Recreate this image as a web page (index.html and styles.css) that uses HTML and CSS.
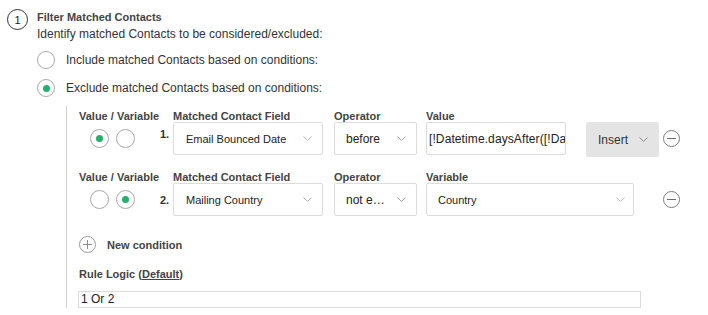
FILE: index.html
```html
<!DOCTYPE html>
<html>
<head>
<meta charset="utf-8">
<link rel="stylesheet" href="styles.css">
</head>
<body>
<div class="step">
  <div class="step-num">1</div>
  <div class="step-body">
    <div class="step-title">Filter Matched Contacts</div>
    <div class="step-desc">Identify matched Contacts to be considered/excluded:</div>
    <div class="option"><span class="radio"></span><span class="option-text">Include matched Contacts based on conditions:</span></div>
    <div class="option"><span class="radio radio-on"></span><span class="option-text">Exclude matched Contacts based on conditions:</span></div>

    <div class="conditions">
      <div class="cond-row">
        <div class="col col-vv">
          <div class="col-label">Value / Variable</div>
          <div class="vv-ctrl">
            <span class="radio radio-sm radio-on"></span>
            <span class="radio radio-sm"></span>
            <span class="cond-num cond-num-top">1.</span>
          </div>
        </div>
        <div class="col col-field">
          <div class="col-label">Matched Contact Field</div>
          <div class="select select-sm"><span>Email Bounced Date</span><svg class="chev" width="9" height="5" viewBox="0 0 9 5"><path d="M0.5 0.5 L4.5 4.5 L8.5 0.5" fill="none" stroke="#b0b0b0" stroke-width="1"/></svg></div>
        </div>
        <div class="col col-op">
          <div class="col-label">Operator</div>
          <div class="select"><span>before</span><svg class="chev" width="9" height="5" viewBox="0 0 9 5"><path d="M0.5 0.5 L4.5 4.5 L8.5 0.5" fill="none" stroke="#a8a8a8" stroke-width="1"/></svg></div>
        </div>
        <div class="col col-value">
          <div class="col-label">Value</div>
          <div class="text-input"><span class="input-text">[!Datetime.daysAfter([!Da</span></div>
        </div>
        <div class="col col-insert">
          <div class="insert-btn"><span>Insert</span><svg class="chev" width="9" height="5" viewBox="0 0 9 5"><path d="M0.5 0.5 L4.5 4.5 L8.5 0.5" fill="none" stroke="#8c8c8c" stroke-width="1"/></svg></div>
        </div>
        <div class="col col-remove">
          <span class="circle-btn"><span class="bar"></span></span>
        </div>
      </div>

      <div class="cond-row">
        <div class="col col-vv">
          <div class="col-label">Value / Variable</div>
          <div class="vv-ctrl">
            <span class="radio radio-sm"></span>
            <span class="radio radio-sm radio-on"></span>
            <span class="cond-num">2.</span>
          </div>
        </div>
        <div class="col col-field">
          <div class="col-label">Matched Contact Field</div>
          <div class="select select-sm"><span>Mailing Country</span><svg class="chev" width="9" height="5" viewBox="0 0 9 5"><path d="M0.5 0.5 L4.5 4.5 L8.5 0.5" fill="none" stroke="#b0b0b0" stroke-width="1"/></svg></div>
        </div>
        <div class="col col-op">
          <div class="col-label">Operator</div>
          <div class="select"><span>not e…</span><svg class="chev" width="9" height="5" viewBox="0 0 9 5"><path d="M0.5 0.5 L4.5 4.5 L8.5 0.5" fill="none" stroke="#a8a8a8" stroke-width="1"/></svg></div>
        </div>
        <div class="col col-variable">
          <div class="col-label">Variable</div>
          <div class="select select-sm select-var"><span>Country</span><svg class="chev" width="9" height="5" viewBox="0 0 9 5"><path d="M0.5 0.5 L4.5 4.5 L8.5 0.5" fill="none" stroke="#c4c4c4" stroke-width="1"/></svg></div>
        </div>
        <div class="col col-remove">
          <span class="circle-btn"><span class="bar"></span></span>
        </div>
      </div>

      <div class="new-cond">
        <span class="circle-btn circle-light"><span class="bar"></span><span class="bar bar-v"></span></span>
        <span class="new-cond-text">New condition</span>
      </div>

      <div class="rule-label">Rule Logic (<span class="underline">Default</span>)</div>
      <div class="rule-input">1 Or 2</div>
    </div>
  </div>
</div>
</body>
</html>
```

FILE: styles.css
```css
* { box-sizing: border-box; }

body {
  margin: 0;
  font-family: "Liberation Sans", Arial, Helvetica, sans-serif;
  font-size: 12px;
  color: #333;
  background: #fff;
}

.step {
  display: flex;
  align-items: flex-start;
  padding-left: 7px;
}

.step-num {
  margin-top: 9px;
  width: 21px;
  height: 21px;
  border: 1px solid #333;
  border-radius: 50%;
  display: flex;
  align-items: center;
  justify-content: center;
  font-size: 11px;
  color: #222;
  flex: none;
}

.step-body {
  margin-left: 9px;
  padding-top: 10px;
  flex: 1;
}

.step-title {
  font-size: 11px;
  font-weight: bold;
  line-height: 14px;
  color: #444;
}

.step-desc {
  margin-top: 2px;
  line-height: 16px;
  font-size: 12px;
  color: #333;
}

.option {
  display: flex;
  align-items: center;
  height: 28px;
}
.step-desc + .option { margin-top: 4px; }

.option-text {
  margin-left: 11px;
  font-size: 12px;
  color: #333;
}

.radio {
  width: 18px;
  height: 18px;
  border: 1px solid #a8a8a8;
  border-radius: 50%;
  display: inline-flex;
  align-items: center;
  justify-content: center;
  background: #fff;
  flex: none;
}
.radio-on::after {
  content: "";
  width: 7px;
  height: 7px;
  border-radius: 50%;
  background: #23b16b;
}
.radio-sm {
  width: 19px;
  height: 19px;
}

.conditions {
  margin-left: 29px;
  margin-top: 4px;
  padding: 4px 0 0 12px;
  border-left: 1px solid #cfcfcf;
}

.cond-row {
  display: flex;
  align-items: flex-start;
  margin-bottom: 14px;
}

.col {
  display: flex;
  flex-direction: column;
  flex: none;
}

.col-label {
  font-size: 11px;
  font-weight: bold;
  line-height: 12px;
  height: 12px;
  color: #444;
  white-space: nowrap;
}

.col-vv { width: 94px; }

.vv-ctrl {
  height: 33px;
  display: flex;
  align-items: center;
  padding-left: 11px;
  gap: 7px;
}

.cond-num {
  margin-left: 18px;
  font-size: 11px;
  font-weight: bold;
  color: #333;
}
.cond-num-top { margin-bottom: 9px; }

.col-field { width: 150px; margin-right: 11px; }
.col-op { width: 83px; margin-right: 9px; }
.col-value { width: 140px; margin-right: 20px; }
.col-variable { width: 208px; margin-right: 29px; }
.col-insert { width: 73px; margin-right: 4px; padding-top: 12px; }
.col-remove { width: 17px; padding-top: 12px; }

.select {
  height: 33px;
  border: 1px solid #dcdcdc;
  border-radius: 2px;
  background: #fff;
  display: flex;
  align-items: center;
  justify-content: space-between;
  padding: 0 10px 0 11px;
  font-size: 12px;
  color: #222;
  white-space: nowrap;
  overflow: hidden;
}
.select-sm { font-size: 11px; padding-left: 12px; }
.select-var { padding-left: 11px; padding-right: 8px; }

.chev { flex: none; }

.text-input {
  height: 33px;
  border: 1px solid #dcdcdc;
  border-radius: 2px;
  display: flex;
  align-items: center;
  padding-left: 2px;
  font-size: 12px;
  color: #222;
  white-space: nowrap;
  overflow: hidden;
}
.input-text { letter-spacing: 0.1px; }

.insert-btn {
  height: 35px;
  background: #e4e4e4;
  border-radius: 2px;
  display: flex;
  align-items: center;
  justify-content: space-between;
  padding: 0 11px 0 12px;
  font-size: 12px;
  color: #333;
}

.col-remove .circle-btn { margin-top: 8px; }

.circle-btn {
  width: 17px;
  height: 17px;
  border: 1px solid #7a7a7a;
  border-radius: 50%;
  position: relative;
  display: flex;
  align-items: center;
  justify-content: center;
  flex: none;
}
.circle-light { border-color: #9a9a9a; }

.bar {
  width: 9px;
  height: 1px;
  background: #6a6a6a;
}
.circle-light .bar { background: #8a8a8a; }
.bar-v {
  position: absolute;
  width: 1px;
  height: 9px;
}

.new-cond {
  margin-top: 20px;
  display: flex;
  align-items: center;
  height: 17px;
}
.new-cond-text {
  margin-left: 11px;
  font-size: 11px;
  font-weight: bold;
  color: #444;
}

.rule-label {
  margin-top: 15px;
  font-size: 11px;
  font-weight: bold;
  line-height: 12px;
  color: #444;
}
.underline { text-decoration: underline; }

.rule-input {
  margin-top: 11px;
  margin-left: -1px;
  width: 563px;
  height: 17px;
  border: 1px solid #dcdcdc;
  font-size: 12px;
  line-height: 15px;
  padding-left: 2px;
  color: #222;
}
```
